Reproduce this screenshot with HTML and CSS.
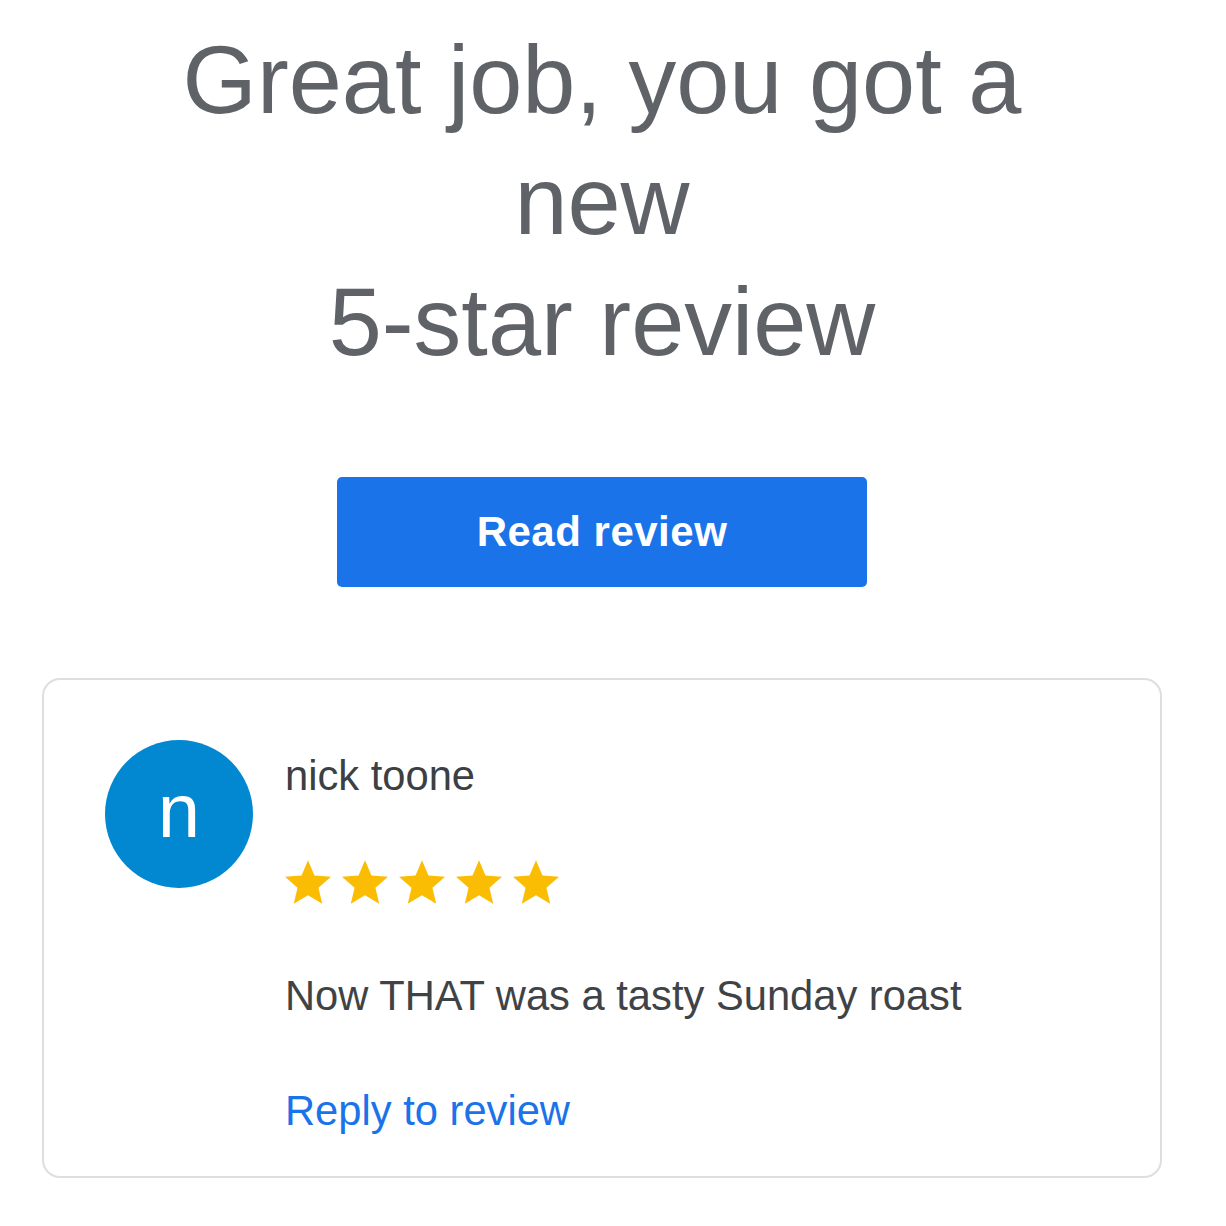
FILE: index.html
```html
<!DOCTYPE html>
<html lang="en">
<head>
<meta charset="utf-8">
<title>New 5-star review</title>
<link rel="stylesheet" href="styles.css">
</head>
<body>
<main class="page">
  <h1 class="headline">Great job, you got a new<br>5-star review</h1>
  <a class="btn" href="#">Read review</a>
  <section class="card">
    <div class="avatar">n</div>
    <div class="review">
      <div class="name">nick toone</div>
      <div class="stars">
        <svg class="star" viewBox="2 2 20 19"><path d="M12 17.27L18.18 21l-1.64-7.03L22 9.24l-7.19-.61L12 2 9.19 8.63 2 9.24l5.46 4.73L5.82 21z"/></svg>
        <svg class="star" viewBox="2 2 20 19"><path d="M12 17.27L18.18 21l-1.64-7.03L22 9.24l-7.19-.61L12 2 9.19 8.63 2 9.24l5.46 4.73L5.82 21z"/></svg>
        <svg class="star" viewBox="2 2 20 19"><path d="M12 17.27L18.18 21l-1.64-7.03L22 9.24l-7.19-.61L12 2 9.19 8.63 2 9.24l5.46 4.73L5.82 21z"/></svg>
        <svg class="star" viewBox="2 2 20 19"><path d="M12 17.27L18.18 21l-1.64-7.03L22 9.24l-7.19-.61L12 2 9.19 8.63 2 9.24l5.46 4.73L5.82 21z"/></svg>
        <svg class="star" viewBox="2 2 20 19"><path d="M12 17.27L18.18 21l-1.64-7.03L22 9.24l-7.19-.61L12 2 9.19 8.63 2 9.24l5.46 4.73L5.82 21z"/></svg>
      </div>
      <p class="text">Now THAT was a tasty Sunday roast</p>
      <a class="reply" href="#">Reply to review</a>
    </div>
  </section>
</main>
</body>
</html>
```

FILE: styles.css
```css
html, body {
  margin: 0;
  padding: 0;
  background: #ffffff;
}

body {
  font-family: "Liberation Sans", Arial, Helvetica, sans-serif;
}

.page {
  width: 1204px;
  padding-top: 20px;
  display: flex;
  flex-direction: column;
  align-items: center;
}

.headline {
  margin: 0;
  max-width: 1000px;
  font-size: 95.5px;
  line-height: 121px;
  font-weight: 400;
  color: #5f6368;
  text-align: center;
}

.btn {
  margin-top: 94px;
  width: 530px;
  height: 110px;
  display: flex;
  align-items: center;
  justify-content: center;
  background: #1a73e8;
  border-radius: 5px;
  color: #ffffff;
  font-size: 42px;
  font-weight: 700;
  letter-spacing: 0.5px;
  text-decoration: none;
}

.card {
  margin-top: 91px;
  box-sizing: border-box;
  width: 1120px;
  border: 2px solid #dedede;
  border-radius: 18px;
  padding: 60px 60px 41px 61px;
  display: flex;
  align-items: flex-start;
  gap: 32px;
}

.avatar {
  flex: none;
  width: 148px;
  height: 148px;
  border-radius: 50%;
  background: #0288d1;
  color: #ffffff;
  font-size: 76px;
  line-height: 142px;
  text-align: center;
}

.review {
  display: flex;
  flex-direction: column;
  align-items: flex-start;
  padding-top: 12px;
  font-size: 41.7px;
  line-height: 48px;
  color: #3c4043;
}

.name {
  color: #3c4043;
}

.stars {
  margin-top: 58px;
  display: flex;
  gap: 11px;
  height: 48px;
  align-items: center;
}

.star {
  width: 46px;
  height: 44px;
  fill: #fbbc04;
}

.text {
  margin: 66px 0 0;
  color: #404346;
}

.reply {
  margin-top: 67px;
  color: #1a73e8;
  text-decoration: none;
}
```
